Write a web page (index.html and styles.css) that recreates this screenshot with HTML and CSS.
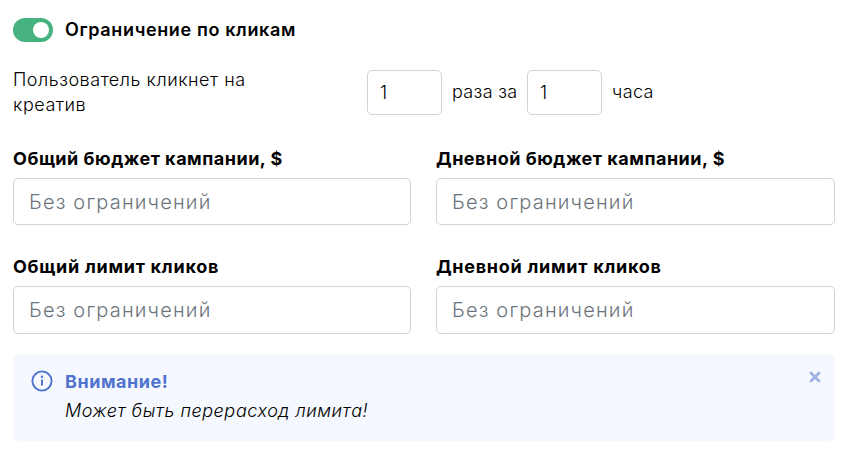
FILE: index.html
```html
<!DOCTYPE html>
<html lang="ru">
<head>
  <meta charset="UTF-8">
  <title>Ограничения</title>
  <link rel="stylesheet" href="styles.css">
</head>
<body>
  <form class="container">
    <label class="switch-row">
      <span class="switch"><span class="switch-knob"></span></span>
      <span class="switch-label">Ограничение по кликам</span>
    </label>

    <div class="frequency">
      <div class="frequency-text">Пользователь кликнет на<br>креатив</div>
      <input class="small-input" type="text" value="1">
      <span class="unit">раза за</span>
      <input class="small-input" type="text" value="1">
      <span class="unit">часа</span>
    </div>

    <div class="limits">
      <div class="field">
        <label for="total-budget">Общий бюджет кампании, $</label>
        <input id="total-budget" type="text" placeholder="Без ограничений">
      </div>
      <div class="field">
        <label for="daily-budget">Дневной бюджет кампании, $</label>
        <input id="daily-budget" type="text" placeholder="Без ограничений">
      </div>
      <div class="field field-clicks">
        <label for="total-clicks">Общий лимит кликов</label>
        <input id="total-clicks" type="text" placeholder="Без ограничений">
      </div>
      <div class="field field-clicks">
        <label for="daily-clicks">Дневной лимит кликов</label>
        <input id="daily-clicks" type="text" placeholder="Без ограничений">
      </div>
    </div>

    <div class="alert">
      <svg class="alert-icon" width="22" height="22" viewBox="0 0 22 22">
        <circle cx="11" cy="11" r="9.6" fill="none" stroke="currentColor" stroke-width="1.9"/>
        <circle cx="11" cy="6.7" r="1.2" fill="currentColor"/>
        <path d="M11 9.4v6.2" stroke="currentColor" stroke-width="2"/>
      </svg>
      <div class="alert-body">
        <div class="alert-title">Внимание!</div>
        <div class="alert-text">Может быть перерасход лимита!</div>
      </div>
      <svg class="alert-close" width="12" height="12" viewBox="0 0 12 12">
        <path d="M2 2l8 8M10 2l-8 8" stroke="currentColor" stroke-width="2.8" stroke-linecap="round"/>
      </svg>
    </div>
  </form>
</body>
</html>
```
FILE: styles.css
```css
* {
  box-sizing: border-box;
}

body {
  margin: 0;
  background: #fff;
  color: #000;
  font-family: Inter, "Open Sans", sans-serif;
  font-size: 18px;
  line-height: 25px;
  letter-spacing: 0.53px;
}

.container {
  padding: 18px 10px 0 13px;
}

.switch-row {
  display: flex;
  align-items: center;
  gap: 12px;
  height: 24px;
}

.switch {
  display: flex;
  justify-content: flex-end;
  width: 40px;
  height: 24px;
  padding: 4px;
  border-radius: 12px;
  background: #45b280;
}

.switch-knob {
  width: 16px;
  height: 16px;
  border-radius: 50%;
  background: #fff;
}

.switch-label {
  padding-bottom: 1px;
  font-weight: 600;
  letter-spacing: 0.63px;
  white-space: nowrap;
}

.frequency {
  display: flex;
  align-items: center;
  height: 50px;
  margin-top: 25px;
}

.frequency-text {
  width: 354px;
  font-weight: 350;
}

input {
  border: 1px solid #ced4da;
  border-radius: 5px;
  background: #fff;
  color: #000;
  font-family: inherit;
  font-weight: 350;
  outline: none;
}

.small-input {
  width: 75px;
  height: 45px;
  padding: 0 12px;
  font-size: 18px;
}

.unit {
  width: 85px;
  padding: 0 0 1px 10px;
  font-weight: 350;
  letter-spacing: 0.35px;
  white-space: nowrap;
}

.limits {
  display: grid;
  grid-template-columns: 398px 399px;
  column-gap: 25px;
  row-gap: 29px;
  margin-top: 29px;
}

.field label {
  display: block;
  height: 32px;
  font-weight: 700;
  letter-spacing: 0.51px;
  white-space: nowrap;
}

.field input {
  display: block;
  width: 100%;
  height: 47px;
  padding: 0 15px;
  font-size: 20px;
  letter-spacing: 1.17px;
}

.field input::placeholder {
  color: #6c757d;
  opacity: 1;
}

.field-clicks label {
  letter-spacing: 0.73px;
}

.field-clicks input {
  height: 48px;
}

.alert {
  display: flex;
  height: 87px;
  margin-top: 20px;
  padding: 16px 14px 0 18px;
  border-radius: 6px;
  background: #f5f8ff;
}

.alert-icon {
  color: #5074ce;
}

.alert-body {
  flex: 1;
  margin-left: 12px;
  line-height: 29px;
}

.alert-title {
  height: 27px;
  line-height: 24px;
  color: #5074ce;
  font-weight: 700;
}

.alert-text {
  font-style: italic;
  font-weight: 350;
  line-height: 28px;
}

.alert-close {
  margin-top: 1px;
  color: #9fb4e5;
}
```
